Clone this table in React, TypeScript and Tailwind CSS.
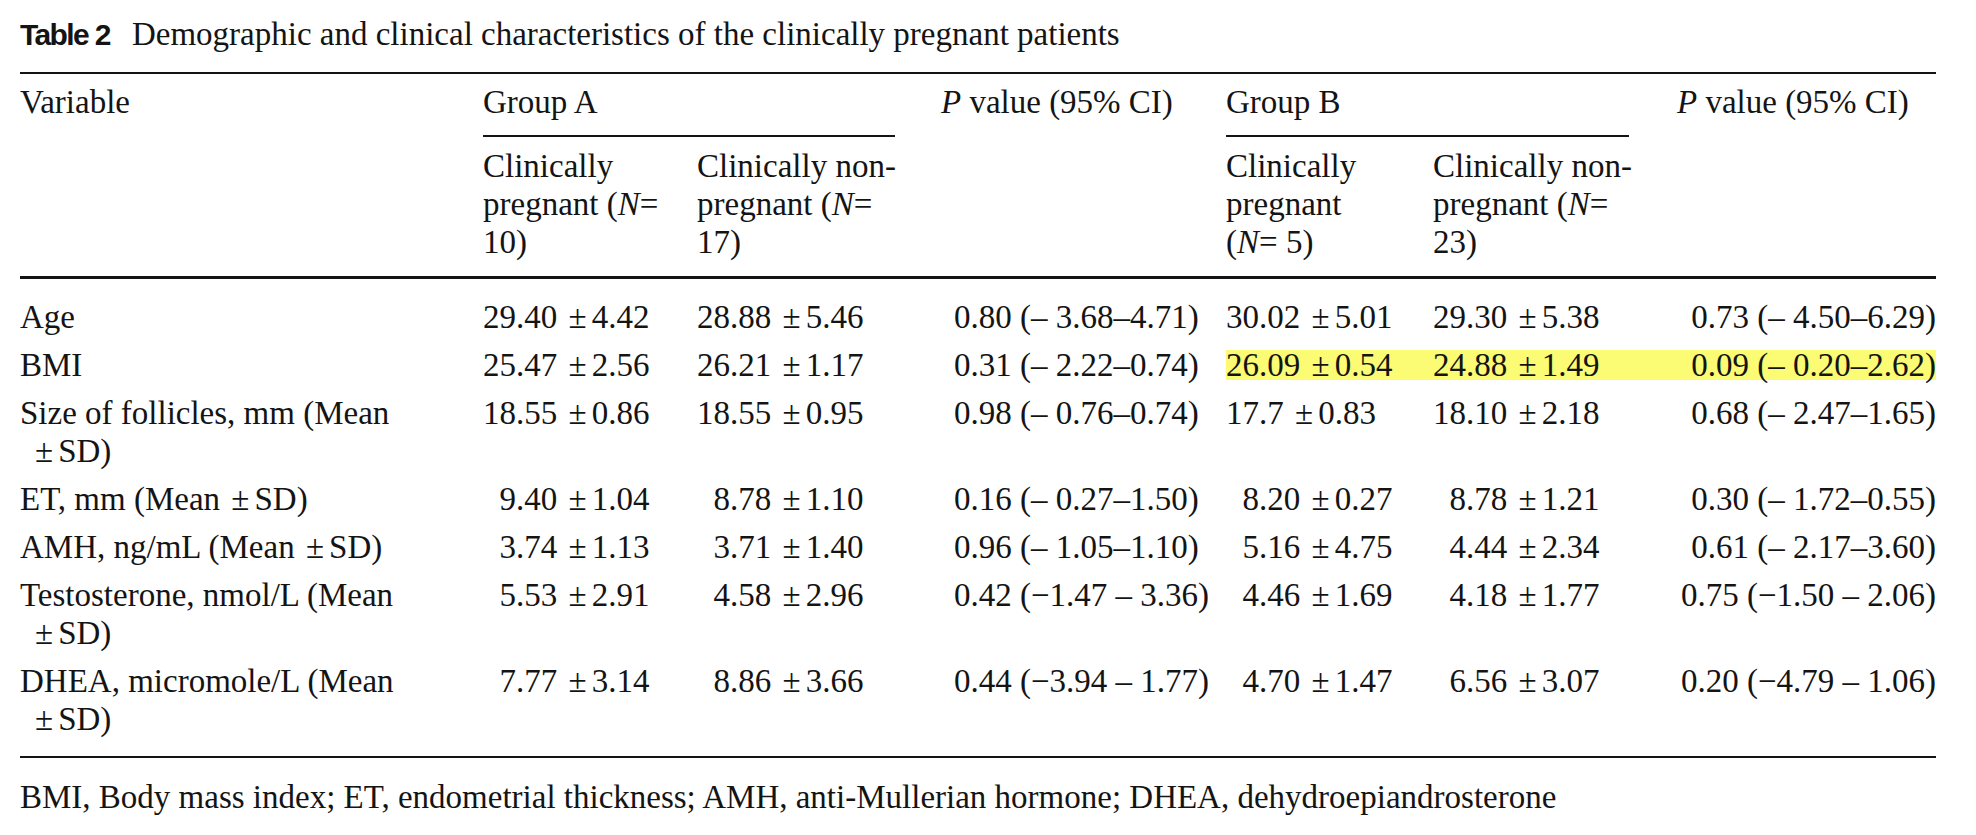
const rows = [
  {
    label: ["Age"],
    a1: "29.40 ±4.42",
    a2: "28.88 ±5.46",
    p1: "0.80 (– 3.68–4.71)",
    b1: "30.02 ±5.01",
    b2: "29.30 ±5.38",
    p2: "0.73 (– 4.50–6.29)",
  },
  {
    label: ["BMI"],
    a1: "25.47 ±2.56",
    a2: "26.21 ±1.17",
    p1: "0.31 (– 2.22–0.74)",
    b1: "26.09 ±0.54",
    b2: "24.88 ±1.49",
    p2: "0.09 (– 0.20–2.62)",
    mark: true,
  },
  {
    label: ["Size of follicles, mm (Mean", "±SD)"],
    a1: "18.55 ±0.86",
    a2: "18.55 ±0.95",
    p1: "0.98 (– 0.76–0.74)",
    b1: "17.7 ±0.83",
    b2: "18.10 ±2.18",
    p2: "0.68 (– 2.47–1.65)",
  },
  {
    label: ["ET, mm (Mean ±SD)"],
    a1: "9.40 ±1.04",
    a2: "8.78 ±1.10",
    p1: "0.16 (– 0.27–1.50)",
    b1: "8.20 ±0.27",
    b2: "8.78 ±1.21",
    p2: "0.30 (– 1.72–0.55)",
  },
  {
    label: ["AMH, ng/mL (Mean ±SD)"],
    a1: "3.74 ±1.13",
    a2: "3.71 ±1.40",
    p1: "0.96 (– 1.05–1.10)",
    b1: "5.16 ±4.75",
    b2: "4.44 ±2.34",
    p2: "0.61 (– 2.17–3.60)",
  },
  {
    label: ["Testosterone, nmol/L (Mean", "±SD)"],
    a1: "5.53 ±2.91",
    a2: "4.58 ±2.96",
    p1: "0.42 (−1.47 – 3.36)",
    b1: "4.46 ±1.69",
    b2: "4.18 ±1.77",
    p2: "0.75 (−1.50 – 2.06)",
  },
  {
    label: ["DHEA, micromole/L (Mean", "±SD)"],
    a1: "7.77 ±3.14",
    a2: "8.86 ±3.66",
    p1: "0.44 (−3.94 – 1.77)",
    b1: "4.70 ±1.47",
    b2: "6.56 ±3.07",
    p2: "0.20 (−4.79 – 1.06)",
  },
];

// the ± sign sits a bit loose in the printed table
function Pm() {
  return <span className="inline-block ml-[3px] mr-[5px]">±</span>;
}

// label text, with the ± spaced like the numbers
function Label({ text }: { text: string }) {
  const parts = text.split("±");
  return (
    <>
      {parts[0]}
      {parts.length > 1 && (
        <>
          <Pm />
          {parts[1]}
        </>
      )}
    </>
  );
}

// mean ± sd, lined up on the decimal point of the mean
function Num({ v }: { v: string }) {
  const [mean, sd] = v.split(" ±");
  const [int, dec] = mean.split(".");
  return (
    <span className="whitespace-nowrap">
      <span className="inline-block w-[33px] text-right">{int}</span>.{dec}{" "}
      <Pm />
      {sd}
    </span>
  );
}

function Mark({ on, children, className = "" }: { on?: boolean; children: React.ReactNode; className?: string }) {
  if (!on) return <div className={className}>{children}</div>;
  return <div className={"bg-[#fbfb74] leading-[30px] my-[4px] " + className}>{children}</div>;
}

function PHead() {
  return (
    <>
      <i>P</i> value (95% CI)
    </>
  );
}

export default function App() {
  return (
    <div className="w-[1976px] min-h-[835px] bg-white pl-[20px] text-[#141414] font-['Liberation_Serif','Times_New_Roman',serif] text-[33px]">
      <div className="pt-[15px] leading-[38px] text-[33px] whitespace-nowrap">
        <span className="font-['Liberation_Sans',sans-serif] font-bold text-[30px] tracking-[-1.6px] mr-[22px]">
          Table 2
        </span>
        Demographic and clinical characteristics of the clinically pregnant patients
      </div>

      <div className="w-[1916px] mt-[18px] border-t-2 border-[#141414]">
        {/* header */}
        <div className="grid grid-cols-[463px_214px_244px_285px_207px_244px_259px] leading-[38px] border-b-[3px] border-[#141414]">
          <div className="pt-[9px]">Variable</div>
          <div className="col-span-2 pt-[9px] pr-[46px]">
            <div className="pb-[14px] border-b-2 border-[#141414]">Group A</div>
          </div>
          <div className="pt-[9px]">
            <PHead />
          </div>
          <div className="col-span-2 pt-[9px] pr-[48px]">
            <div className="pb-[14px] border-b-2 border-[#141414]">Group B</div>
          </div>
          <div className="pt-[9px]">
            <PHead />
          </div>

          <div />
          <div className="pt-[10px] pb-[15px]">
            Clinically
            <br />
            pregnant (<i>N</i>=
            <br />
            10)
          </div>
          <div className="pt-[10px] pb-[15px]">
            Clinically non-
            <br />
            pregnant (<i>N</i>=
            <br />
            17)
          </div>
          <div />
          <div className="pt-[10px] pb-[15px]">
            Clinically
            <br />
            pregnant
            <br />
            (<i>N</i>= 5)
          </div>
          <div className="pt-[10px] pb-[15px]">
            Clinically non-
            <br />
            pregnant (<i>N</i>=
            <br />
            23)
          </div>
          <div />
        </div>

        {/* body */}
        <div className="pt-[14px] pb-[13px] border-b-2 border-[#141414] grid grid-cols-[463px_214px_244px_285px_207px_244px_259px] leading-[38px]">
          {rows.map((r) => (
            <div key={r.label[0]} className="contents">
              <div className="py-[5px]">
                <div>
                  <Label text={r.label[0]} />
                </div>
                {r.label[1] && (
                  <div className="pl-[12px]">
                    <Label text={r.label[1]} />
                  </div>
                )}
              </div>
              <div className="py-[5px]">
                <Num v={r.a1} />
              </div>
              <div className="py-[5px]">
                <Num v={r.a2} />
              </div>
              <div className="py-[5px] pl-[13px] whitespace-nowrap">{r.p1}</div>
              <div className="py-[5px]">
                <Mark on={r.mark}>
                  <Num v={r.b1} />
                </Mark>
              </div>
              <div className="py-[5px]">
                <Mark on={r.mark}>
                  <Num v={r.b2} />
                </Mark>
              </div>
              <div className="py-[5px]">
                <Mark on={r.mark} className="text-right whitespace-nowrap">
                  {r.p2}
                </Mark>
              </div>
            </div>
          ))}
        </div>
      </div>

      <div className="mt-[20px] leading-[38px] whitespace-nowrap">
        BMI, Body mass index; ET, endometrial thickness; AMH, anti-Mullerian hormone; DHEA, dehydroepiandrosterone
      </div>
    </div>
  );
}
